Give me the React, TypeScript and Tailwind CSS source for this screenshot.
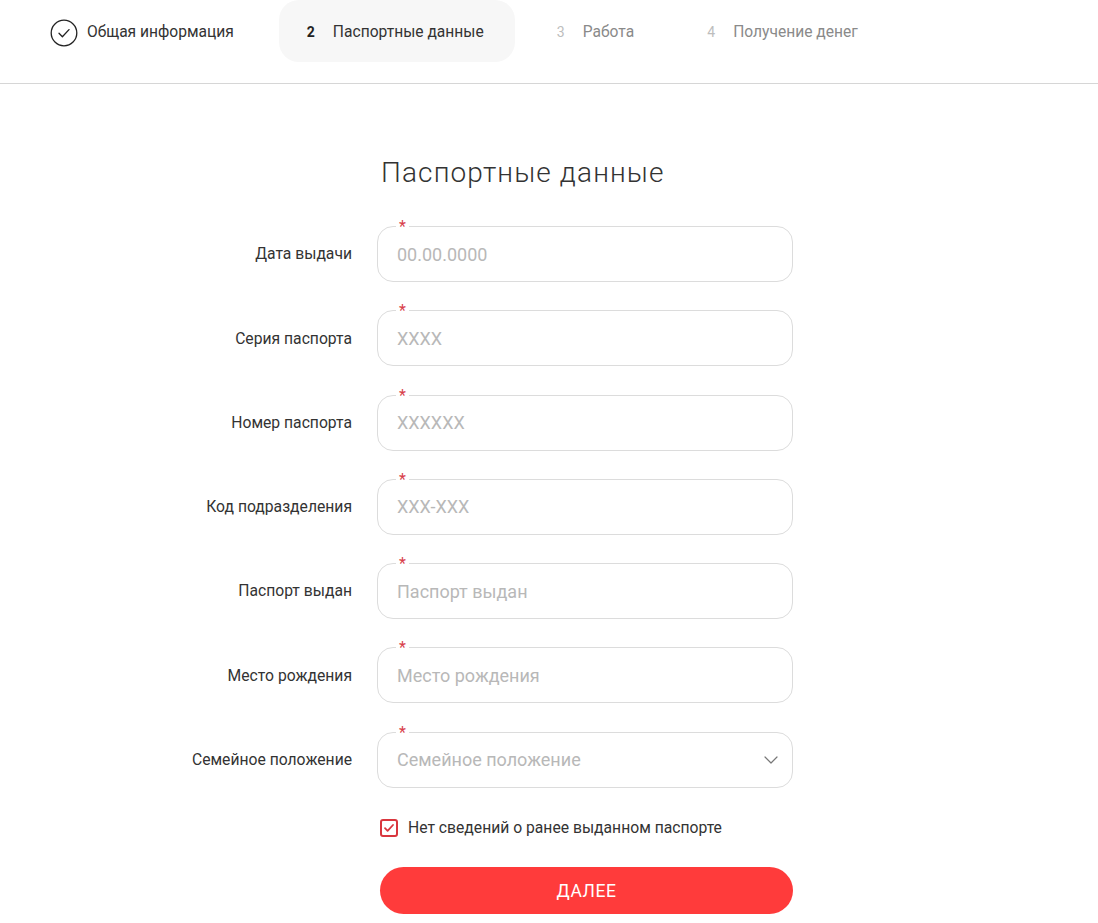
import React from 'react';

type Step = { num: string; label: string; state: 'done' | 'active' | 'todo' };

const steps: Step[] = [
  { num: '1', label: 'Общая информация', state: 'done' },
  { num: '2', label: 'Паспортные данные', state: 'active' },
  { num: '3', label: 'Работа', state: 'todo' },
  { num: '4', label: 'Получение денег', state: 'todo' },
];

const fields = [
  { label: 'Дата выдачи', placeholder: '00.00.0000' },
  { label: 'Серия паспорта', placeholder: 'XXXX' },
  { label: 'Номер паспорта', placeholder: 'XXXXXX' },
  { label: 'Код подразделения', placeholder: 'XXX-XXX' },
  { label: 'Паспорт выдан', placeholder: 'Паспорт выдан' },
  { label: 'Место рождения', placeholder: 'Место рождения' },
];

const CheckCircle = () => (
  <svg className="w-[28px] h-[28px]" viewBox="0 0 28 28" fill="none" stroke="#222" strokeWidth="1.3">
    <circle cx="14" cy="14" r="12.8" />
    <path d="M9 14.2l3.4 3.6L19 10.6" strokeLinecap="round" strokeLinejoin="round" />
  </svg>
);

const StepItem: React.FC<{ step: Step }> = ({ step }) => {
  const active = step.state === 'active';
  return (
    <div
      className={`h-[62px] pl-[28px] pr-[31px] pt-[3px] flex items-center rounded-[20px] ${active ? 'bg-[#f7f7f7]' : ''}`}
    >
      {step.state === 'done' ? (
        <div className="flex items-center gap-[9px]">
          <CheckCircle />
          <span className="text-[15.6px] text-[#333]">{step.label}</span>
        </div>
      ) : (
        <div className="flex items-center">
          <span
            className={`w-[26px] text-[14px] ${active ? 'font-bold text-[#222]' : 'text-[#bdbdbd]'}`}
          >
            {step.num}
          </span>
          <span className={`text-[15.6px] ${active ? 'text-[#333]' : 'text-[#8a8a8a]'}`}>
            {step.label}
          </span>
        </div>
      )}
    </div>
  );
};

const Field: React.FC<{ placeholder: string; select?: boolean }> = ({ placeholder, select }) => (
  <div className="relative h-[56px] w-[416px] rounded-[16px] border border-[#dcdcdc] flex items-center pl-[19px] pr-[14px]">
    <span className="absolute -top-[9px] left-[18px] px-[3px] bg-white text-[#d8404a] text-[16px] leading-[18px]">
      *
    </span>
    <span className="flex-1 text-[18px] text-[#b8b8b8]">{placeholder}</span>
    {select && (
      <svg className="w-[14px] h-[8px]" viewBox="0 0 14 8" fill="none" stroke="#777" strokeWidth="1.2">
        <path d="M1 1l6 6 6-6" strokeLinecap="round" strokeLinejoin="round" />
      </svg>
    )}
  </div>
);

export default function App() {
  return (
    <div className="min-h-[923px] bg-white" style={{ fontFamily: 'Roboto, "Noto Sans", sans-serif' }}>
      {/* Steps */}
      <div className="h-[84px] border-b border-[#d6d6d6] pl-[22px] flex items-start gap-[14px]">
        {steps.map((s) => (
          <StepItem key={s.num} step={s} />
        ))}
      </div>

      {/* Form */}
      <div className="pl-[152px] pt-[72px]">
        <h1 className="ml-[229px] text-[28px] leading-[34px] font-light tracking-[0.04em] text-[#333]">
          Паспортные данные
        </h1>

        <div className="mt-[36px] flex flex-col gap-[28.3px]">
          {fields.map((f) => (
            <div key={f.label} className="flex items-center gap-[25px]">
              <label className="w-[200px] text-right text-[15.7px] text-[#333]">{f.label}</label>
              <Field placeholder={f.placeholder} />
            </div>
          ))}
          <div className="flex items-center gap-[25px]">
            <label className="w-[200px] text-right text-[15.7px] text-[#333]">Семейное положение</label>
            <Field placeholder="Семейное положение" select />
          </div>
        </div>

        <div className="ml-[228px] mt-[28px] flex items-center gap-[10px]">
          <span className="w-[18px] h-[18px] rounded-[3px] border-2 border-[#d9363e] flex items-center justify-center">
            <svg className="w-[12px] h-[12px]" viewBox="0 0 12 12" fill="none" stroke="#d9363e" strokeWidth="1.8">
              <path d="M2 6.2l2.6 2.6L10 3" strokeLinecap="round" strokeLinejoin="round" />
            </svg>
          </span>
          <span className="text-[15.7px] text-[#333]">Нет сведений о ранее выданном паспорте</span>
        </div>

        <button className="ml-[228px] mt-[28px] w-[413px] h-[47px] rounded-full bg-[#ff3b3b] text-white text-[17.5px] tracking-[0.03em]">
          ДАЛЕЕ
        </button>
      </div>
    </div>
  );
}
